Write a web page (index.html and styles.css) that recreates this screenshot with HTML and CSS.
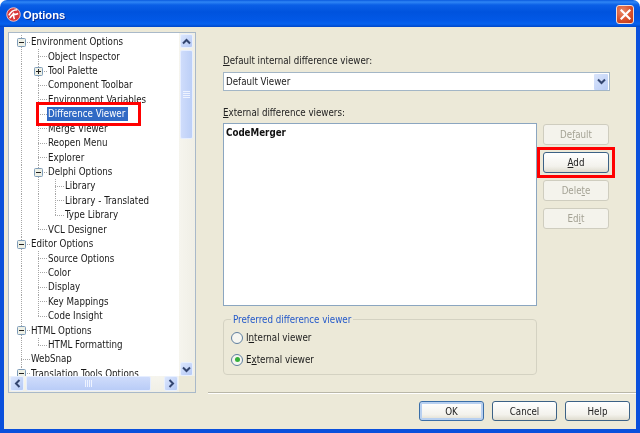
FILE: index.html
```html
<!DOCTYPE html>
<html lang="en">
<head>
<meta charset="utf-8">
<title>Options</title>
<link rel="stylesheet" href="styles.css">
</head>
<body>
<div class="window">
  <header class="titlebar">
    <svg class="app-icon" width="15" height="15" viewBox="0 0 16 16"><circle cx="8" cy="8" r="7.2" fill="#d8373a" stroke="#f3c9c4"/><path d="M3 9c2-4 5-6 9-6M4 12c1-2 3-3 4-5 1 1 3 1 5 0M8 7c0 2 0 4 1 6" fill="none" stroke="#fff" stroke-width="1.7"/></svg>
    <span class="title">Options</span>
    <span class="close"><svg width="11" height="11" viewBox="0 0 11 11"><path d="M1.5 1.5l8 8M9.5 1.5l-8 8" stroke="#fff" stroke-width="2.2" stroke-linecap="square"/></svg></span>
  </header>
  <div class="client">
    <div class="main">
      <div class="tree-panel">
        <div class="tree">
          <div class="row"><span class="cell box"><svg width="9" height="9" viewBox="0 0 9 9"><rect x=".5" y=".5" width="8" height="8" rx="1" fill="#eef0e6" stroke="#7f9db9"/><path d="M2 4.5h5" stroke="#222"/></svg></span><span class="label">Environment Options</span></div>
          <div class="row"><span class="cell v"></span><span class="cell t"></span><span class="label">Object Inspector</span></div>
          <div class="row"><span class="cell v"></span><span class="cell box"><svg width="9" height="9" viewBox="0 0 9 9"><rect x=".5" y=".5" width="8" height="8" rx="1" fill="#eef0e6" stroke="#7f9db9"/><path d="M2 4.5h5M4.5 2v5" stroke="#222"/></svg></span><span class="label">Tool Palette</span></div>
          <div class="row"><span class="cell v"></span><span class="cell t"></span><span class="label">Component Toolbar</span></div>
          <div class="row"><span class="cell v"></span><span class="cell t"></span><span class="label">Environment Variables</span></div>
          <div class="row"><span class="cell v"></span><span class="cell t"></span><span class="label selected">Difference Viewer</span></div>
          <div class="row"><span class="cell v"></span><span class="cell t"></span><span class="label">Merge Viewer</span></div>
          <div class="row"><span class="cell v"></span><span class="cell t"></span><span class="label">Reopen Menu</span></div>
          <div class="row"><span class="cell v"></span><span class="cell t"></span><span class="label">Explorer</span></div>
          <div class="row"><span class="cell v"></span><span class="cell box"><svg width="9" height="9" viewBox="0 0 9 9"><rect x=".5" y=".5" width="8" height="8" rx="1" fill="#eef0e6" stroke="#7f9db9"/><path d="M2 4.5h5" stroke="#222"/></svg></span><span class="label">Delphi Options</span></div>
          <div class="row"><span class="cell v"></span><span class="cell v"></span><span class="cell t"></span><span class="label">Library</span></div>
          <div class="row"><span class="cell v"></span><span class="cell v"></span><span class="cell t"></span><span class="label">Library - Translated</span></div>
          <div class="row"><span class="cell v"></span><span class="cell v"></span><span class="cell l"></span><span class="label">Type Library</span></div>
          <div class="row"><span class="cell v"></span><span class="cell l"></span><span class="label">VCL Designer</span></div>
          <div class="row"><span class="cell box"><svg width="9" height="9" viewBox="0 0 9 9"><rect x=".5" y=".5" width="8" height="8" rx="1" fill="#eef0e6" stroke="#7f9db9"/><path d="M2 4.5h5" stroke="#222"/></svg></span><span class="label">Editor Options</span></div>
          <div class="row"><span class="cell v"></span><span class="cell t"></span><span class="label">Source Options</span></div>
          <div class="row"><span class="cell v"></span><span class="cell t"></span><span class="label">Color</span></div>
          <div class="row"><span class="cell v"></span><span class="cell t"></span><span class="label">Display</span></div>
          <div class="row"><span class="cell v"></span><span class="cell t"></span><span class="label">Key Mappings</span></div>
          <div class="row"><span class="cell v"></span><span class="cell l"></span><span class="label">Code Insight</span></div>
          <div class="row"><span class="cell box"><svg width="9" height="9" viewBox="0 0 9 9"><rect x=".5" y=".5" width="8" height="8" rx="1" fill="#eef0e6" stroke="#7f9db9"/><path d="M2 4.5h5" stroke="#222"/></svg></span><span class="label">HTML Options</span></div>
          <div class="row"><span class="cell v"></span><span class="cell l"></span><span class="label">HTML Formatting</span></div>
          <div class="row"><span class="cell t"></span><span class="label">WebSnap</span></div>
          <div class="row"><span class="cell box"><svg width="9" height="9" viewBox="0 0 9 9"><rect x=".5" y=".5" width="8" height="8" rx="1" fill="#eef0e6" stroke="#7f9db9"/><path d="M2 4.5h5" stroke="#222"/></svg></span><span class="label">Translation Tools Options</span></div>
        </div>
        <div class="vscroll">
          <span class="sb-btn"><svg width="9" height="7" viewBox="0 0 9 7"><path d="M1 5.5l3.5-3.5 3.5 3.5" fill="none" stroke="#33456f" stroke-width="2"/></svg></span>
          <span class="vthumb"><i></i><i></i><i></i><i></i></span>
          <span class="spacer"></span>
          <span class="sb-btn"><svg width="9" height="7" viewBox="0 0 9 7"><path d="M1 1.5l3.5 3.5 3.5-3.5" fill="none" stroke="#33456f" stroke-width="2"/></svg></span>
        </div>
        <div class="hscroll">
          <span class="sb-btn"><svg width="7" height="9" viewBox="0 0 7 9"><path d="M5.5 1L2 4.5 5.5 8" fill="none" stroke="#33456f" stroke-width="2"/></svg></span>
          <span class="hthumb"><i></i><i></i><i></i><i></i></span>
          <span class="spacer"></span>
          <span class="sb-btn"><svg width="7" height="9" viewBox="0 0 7 9"><path d="M1.5 1L5 4.5 1.5 8" fill="none" stroke="#33456f" stroke-width="2"/></svg></span>
        </div>
        <div class="corner"></div>
      </div>
      <div class="pane">
        <label class="caption"><u>D</u>efault internal difference viewer:</label>
        <div class="combo"><span class="combo-text">Default Viewer</span><span class="combo-btn"><svg width="9" height="7" viewBox="0 0 9 7"><path d="M1 1.5l3.5 3.5 3.5-3.5" fill="none" stroke="#33456f" stroke-width="2"/></svg></span></div>
        <label class="caption second"><u>E</u>xternal difference viewers:</label>
        <div class="list-row">
          <div class="list"><strong>CodeMerger</strong></div>
          <div class="side-buttons">
            <button class="btn" disabled>De<u>f</u>ault</button>
            <button class="btn"><u>A</u>dd</button>
            <button class="btn" disabled>Dele<u>t</u>e</button>
            <button class="btn" disabled>Ed<u>i</u>t</button>
          </div>
        </div>
        <fieldset class="group">
          <legend>Preferred difference viewer</legend>
          <div class="radio"><span class="dot"></span><span>I<u>n</u>ternal viewer</span></div>
          <div class="radio"><span class="dot on"></span><span>E<u>x</u>ternal viewer</span></div>
        </fieldset>
      </div>
    </div>
    <div class="footer">
      <button class="btn default">OK</button>
      <button class="btn">Cancel</button>
      <button class="btn">Help</button>
    </div>
  </div>
  <div class="mark mark-tree"></div>
  <div class="mark mark-add"></div>
</div>
</body>
</html>
```
FILE: styles.css
```css
* { box-sizing: border-box; }
html, body { margin: 0; padding: 0; }
body { width: 640px; height: 433px; overflow: hidden; background: #fff; font-family: "DejaVu Sans Condensed", "Liberation Sans", sans-serif; font-size: 9.7px; color: #1a1a1a; }
.window { position: relative; width: 640px; height: 433px; display: flex; flex-direction: column; border-radius: 7px 7px 0 0; overflow: hidden; filter: blur(0.3px); }
.titlebar { height: 27px; flex: none; display: flex; align-items: center; padding: 2px 6px 0; background: linear-gradient(to bottom, #0a5ade 0, #2f86f5 2px, #0a5fe6 5px, #0053de 12px, #0258e6 20px, #0662ee 24px, #0047c8 27px); }
.app-icon { flex: none; margin-right: 2px; }
.title { flex: 1; margin-top: 1px; color: #fff; font-family: "Liberation Sans", sans-serif; font-weight: 700; font-size: 11.2px; text-shadow: 1px 1px 0 #0a2f9a; }
.close { width: 18px; height: 19px; flex: none; display: flex; align-items: center; justify-content: center; border: 1px solid #f3ddd5; border-radius: 3px; background: radial-gradient(circle at 35% 30%, #ea8a68, #d9512c 55%, #bd3312); }
.client { flex: 1; min-height: 0; display: flex; flex-direction: column; background: #ece9d8; border: solid #0a50dc; border-width: 0 4px 4px 4px; }
.main { height: 365px; flex: none; display: flex; padding: 5px 0 0 4px; }

.tree-panel { width: 188px; height: 361px; flex: none; display: grid; grid-template-columns: 1fr 16px; grid-template-rows: 1fr 16px; border: 1px solid #a9b9c9; background: #fff; }
.tree { overflow: hidden; padding: 2px 0 0 4px; min-height: 0; }
.row { height: 14.43px; display: flex; align-items: center; white-space: nowrap; }
.cell { width: 17px; height: 100%; flex: none; display: flex; align-items: center; justify-content: center; }
.v { background: repeating-linear-gradient(to bottom, #a6a6a6 0 1px, transparent 1px 2px) 8px 0 / 1px 100% no-repeat; }
.t { background: repeating-linear-gradient(to bottom, #a6a6a6 0 1px, transparent 1px 2px) 8px 0 / 1px 100% no-repeat, repeating-linear-gradient(to right, #a6a6a6 0 1px, transparent 1px 2px) 8px 50% / 9px 1px no-repeat; }
.l { background: repeating-linear-gradient(to bottom, #a6a6a6 0 1px, transparent 1px 2px) 8px 0 / 1px 50% no-repeat, repeating-linear-gradient(to right, #a6a6a6 0 1px, transparent 1px 2px) 8px 50% / 9px 1px no-repeat; }
.box { background: repeating-linear-gradient(to bottom, #a6a6a6 0 1px, transparent 1px 2px) 8px 0 / 1px 100% no-repeat, repeating-linear-gradient(to right, #a6a6a6 0 1px, transparent 1px 2px) 8px 50% / 9px 1px no-repeat; }
.label { margin-left: 0; padding: 0 1px; line-height: 14px; }
.selected { background: #316ac5; color: #fff; margin-left: 0; padding: 0 3px 0 1px; }

.vscroll { display: flex; flex-direction: column; align-items: stretch; padding: 1px 2px 0 1px; background: linear-gradient(to right, #f6f5ee, #f0efe6); }
.hscroll { display: flex; padding: 0 1px 1px 1px; background: linear-gradient(to bottom, #f6f5ee, #f0efe6); }
.corner { background: #ece9d8; }
.sb-btn { flex: none; width: 14px; height: 14px; display: flex; align-items: center; justify-content: center; border-radius: 2px; border: 1px solid #e8f0ff; background: linear-gradient(135deg, #dbe6fd, #b5c9f5); }
.vscroll .sb-btn:first-child { margin-bottom: 2px; }
.vscroll .sb-btn { width: 13px; }
.hscroll .sb-btn { height: 15px; }
.spacer { flex: 1; }
.vthumb { height: 89px; display: flex; flex-direction: column; align-items: center; justify-content: center; gap: 1px; border: 1px solid #e6eeff; border-radius: 2px; background: linear-gradient(to right, #cfdcfb, #bccff7); }
.hthumb { width: 125px; margin-left: 2px; display: flex; align-items: center; justify-content: center; gap: 1px; border: 1px solid #e6eeff; border-radius: 2px; background: linear-gradient(to bottom, #cfdcfb, #b9ccf7); }
.vthumb i { width: 7px; height: 1px; background: #eef3ff; }
.hthumb i { width: 1px; height: 7px; background: #eef3ff; }

.pane { flex: 1; min-width: 0; display: flex; flex-direction: column; padding: 22px 0 0 27px; }
.caption { height: 13px; line-height: 13px; color: #222; }
.second { margin-top: 15px; }
.combo { width: 387px; height: 19px; margin-top: 5px; display: flex; align-items: center; justify-content: space-between; border: 1px solid #a3b6c6; background: #fff; padding: 0 1px 0 2px; }
.combo-btn { width: 14px; height: 16px; display: flex; align-items: center; justify-content: center; background: linear-gradient(135deg, #d9e4fb, #bacdf6); border-radius: 1px; }
.list-row { display: flex; margin-top: 4px; }
.list { width: 314px; height: 183px; background: #fff; border: 1px solid #8ba6c0; padding: 2px; line-height: 13px; color: #111; }
.side-buttons { display: flex; flex-direction: column; gap: 7px; margin: 1px 0 0 6px; }
.btn { width: 66px; height: 21px; padding: 0; font: 9.7px "DejaVu Sans Condensed", "Liberation Sans", sans-serif; color: #222; border: 1px solid #3c6286; border-radius: 3px; background: linear-gradient(to bottom, #fff, #f3f2ec 70%, #dfdccf); }
.btn:disabled { color: #a4a294; border-color: #cfcdbf; background: #f4f3ec; }
.group { width: 314px; height: 62px; margin: 7px 0 0; padding: 5px 0 0 7px; border: 1px solid #d4d2c2; border-radius: 4px; }
.group legend { color: #2459c9; padding: 0 2px; margin-left: 0; line-height: 13px; }
.radio { height: 13px; display: flex; align-items: center; gap: 3px; margin-bottom: 9px; }
.dot { width: 12px; height: 12px; flex: none; display: flex; align-items: center; justify-content: center; border: 1.5px solid #5f7f9f; border-radius: 50%; background: #f6f6f1; }
.dot.on::before { content: ""; width: 5px; height: 5px; border-radius: 50%; background: #36b03c; }

.footer { flex: 1; display: flex; justify-content: flex-end; gap: 8px; padding: 8px 6px 0 0; margin-left: 204px; border-top: 1px solid #b9b7a8; box-shadow: inset 0 1px 0 #fff; }
.footer .btn { width: 65px; height: 20px; }
.default { border-color: #3a6ea8; box-shadow: inset 0 0 0 2px #b8d0f0; }

.mark { position: absolute; border: 3px solid #f00; }
.mark-tree { left: 36px; top: 102px; width: 105px; height: 24px; }
.mark-add { left: 537px; top: 147px; width: 78px; height: 31px; }
```
